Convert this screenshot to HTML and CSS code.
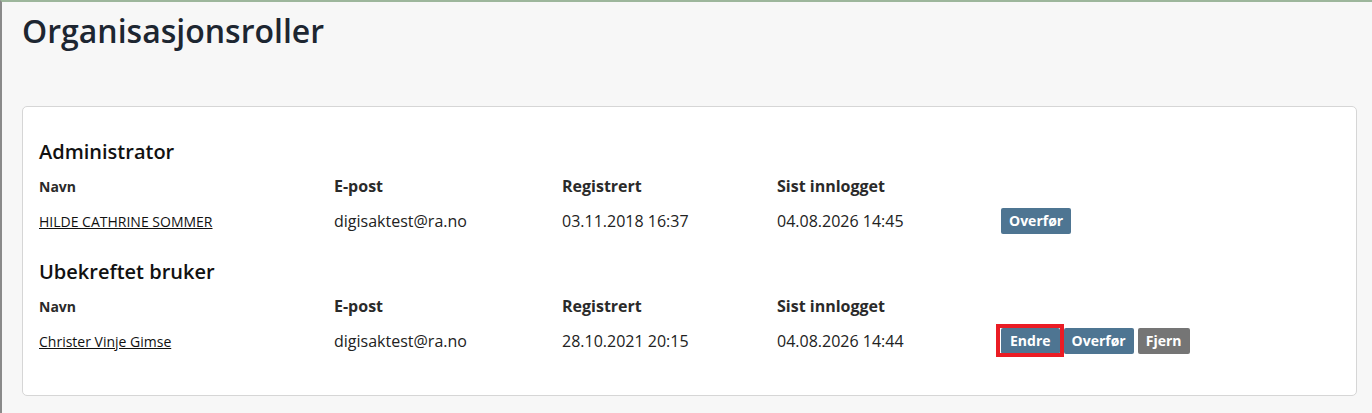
FILE: index.html
```html
<!DOCTYPE html>
<html lang="no">
<head>
<meta charset="utf-8">
<title>Organisasjonsroller</title>
<link rel="stylesheet" href="styles.css">
</head>
<body>
<main class="page">
  <h1 class="page-title">Organisasjonsroller</h1>
  <section class="card">
    <div class="role">
      <h2 class="role-title">Administrator</h2>
      <div class="row row-head">
        <div class="col-name">Navn</div>
        <div>E-post</div>
        <div>Registrert</div>
        <div>Sist innlogget</div>
        <div></div>
      </div>
      <div class="row row-data">
        <div class="col-name"><a href="#" class="user-link">HILDE CATHRINE SOMMER</a></div>
        <div>digisaktest@ra.no</div>
        <div>03.11.2018 16:37</div>
        <div>04.08.2026 14:45</div>
        <div class="actions"><button class="btn btn-blue">Overfør</button></div>
      </div>
    </div>
    <div class="role">
      <h2 class="role-title">Ubekreftet bruker</h2>
      <div class="row row-head">
        <div class="col-name">Navn</div>
        <div>E-post</div>
        <div>Registrert</div>
        <div>Sist innlogget</div>
        <div></div>
      </div>
      <div class="row row-data">
        <div class="col-name"><a href="#" class="user-link">Christer Vinje Gimse</a></div>
        <div>digisaktest@ra.no</div>
        <div>28.10.2021 20:15</div>
        <div>04.08.2026 14:44</div>
        <div class="actions">
          <button class="btn btn-blue btn-highlight">Endre</button>
          <button class="btn btn-blue">Overfør</button>
          <button class="btn btn-gray">Fjern</button>
        </div>
      </div>
    </div>
  </section>
</main>
</body>
</html>
```

FILE: styles.css
```css
* { box-sizing: border-box; }

html, body {
  margin: 0;
  padding: 0;
}

body {
  background: #f7f7f7;
  font-family: "Open Sans", "Liberation Sans", sans-serif;
  color: #222;
  border-top: 2px solid #9db69c;
  border-left: 2px solid #8a8a8a;
  min-height: 413px;
}

.page {
  padding: 0 15px 0 20px;
}

.page-title {
  margin: 9px 0 0 0;
  font-size: 32px;
  line-height: 40px;
  font-weight: 600;
  color: #1d2631;
}

.card {
  margin-top: 55px;
  background: #fff;
  border: 1px solid #d6d6d6;
  border-radius: 5px;
  padding: 33px 16px 37px 16px;
}

.role + .role {
  margin-top: 22px;
}

.role-title {
  margin: 0;
  font-size: 20px;
  line-height: 24px;
  font-weight: 600;
  color: #111;
}

.row {
  display: grid;
  grid-template-columns: 295px 228px 215px 224px 1fr;
}

.row-head {
  margin-top: 11px;
  font-size: 16px;
  line-height: 22px;
  font-weight: 700;
  color: #2a2a2a;
  align-items: baseline;
}

.row-head .col-name {
  font-size: 14px;
}

.row-data {
  margin-top: 6px;
  height: 34px;
  align-items: center;
  font-size: 16px;
  line-height: 24px;
  color: #222;
}

.user-link {
  font-size: 14px;
  color: #111;
  text-decoration: underline;
}

.actions {
  display: flex;
  gap: 4px;
  align-items: center;
}

.btn {
  font-family: "Open Sans", "Liberation Sans", sans-serif;
  font-size: 14px;
  font-weight: 700;
  line-height: 20px;
  height: 26px;
  padding: 3px 8px;
  border: 0;
  border-radius: 2px;
  color: #fff;
  cursor: pointer;
}

.btn-blue {
  background: #4e7592;
}

.btn-gray {
  background: #757575;
}

.btn-highlight {
  position: relative;
  padding: 3px 9px;
}

.btn-highlight::after {
  content: "";
  position: absolute;
  top: -4px;
  right: -4px;
  bottom: -3px;
  left: -5px;
  border: 4px solid #ea1c24;
  pointer-events: none;
}
```
